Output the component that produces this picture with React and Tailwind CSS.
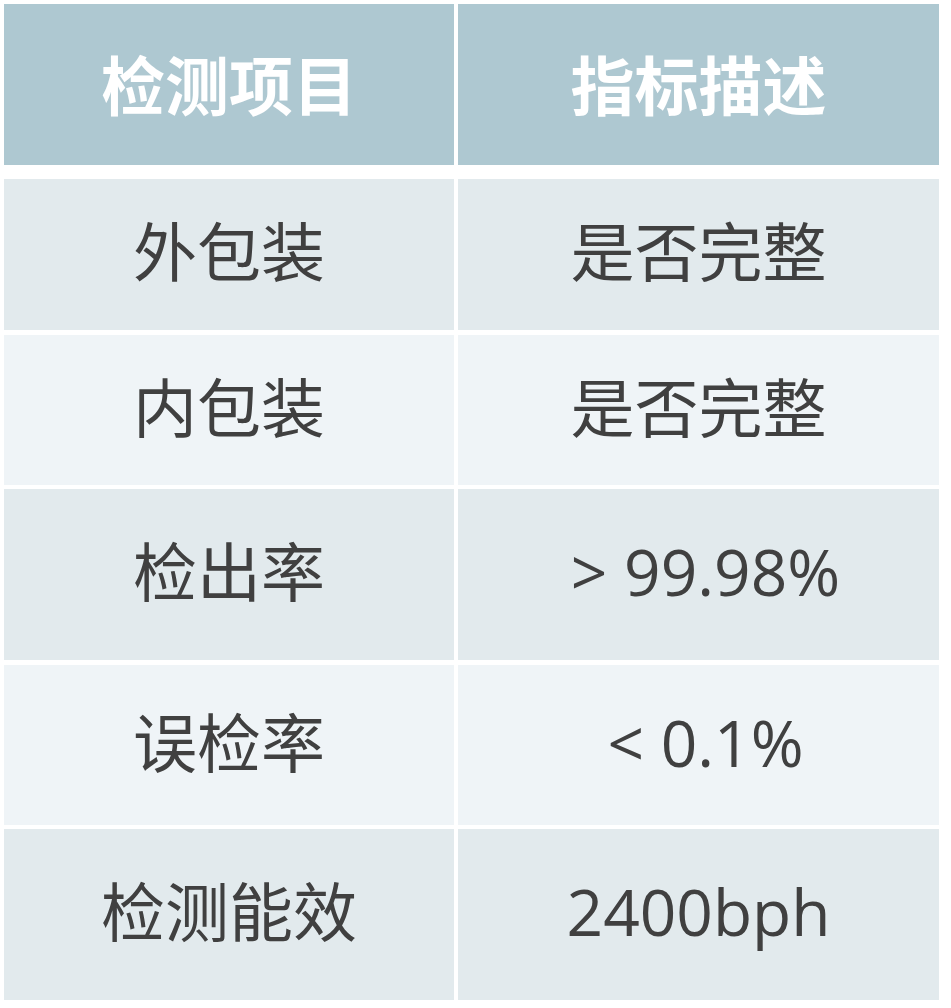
export default function App() {
  const rows = [
    { a: "外包装", b: "是否完整", h: "h-[151px]", bg: "bg-[#e2eaed]" },
    { a: "内包装", b: "是否完整", h: "h-[150px]", bg: "bg-[#eff4f7]" },
    { a: "检出率", b: "> 99.98%", h: "h-[171px]", bg: "bg-[#e2eaed]", pl: "pl-[14px]" },
    { a: "误检率", b: "< 0.1%", h: "h-[160px]", bg: "bg-[#eff4f7]", pl: "pl-[14px]" },
    { a: "检测能效", b: "2400bph", h: "h-[171px]", bg: "bg-[#e2eaed]" },
  ];
  const gaps = ["mt-[14px]", "mt-[5px]", "mt-[4px]", "mt-[5px]", "mt-[4px]"];
  return (
    <div
      className="w-[951px] h-[1008px] bg-white pt-[4px] pl-[4px]"
      style={{ fontFamily: '"Open Sans", "Noto Sans CJK SC", sans-serif' }}
    >
      <div className="flex gap-[4px] h-[161px]">
        <div className="w-[450px] bg-[#aec8d1] flex items-center justify-center text-white font-bold text-[64px] leading-none pt-[2px]">
          检测项目
        </div>
        <div className="w-[481px] bg-[#aec8d1] flex items-center justify-center text-white font-bold text-[64px] leading-none pt-[2px]">
          指标描述
        </div>
      </div>
      {rows.map((r, i) => (
        <div key={i} className={`flex gap-[4px] ${r.h} ${gaps[i]}`}>
          <div className={`w-[450px] ${r.bg} flex items-center justify-center text-[#404040] text-[64px] leading-none pb-[5px]`}>
            {r.a}
          </div>
          <div className={`w-[481px] ${r.bg} flex items-center justify-center text-[#404040] text-[64px] leading-none pb-[5px] ${r.pl || ""}`}>
            {r.b}
          </div>
        </div>
      ))}
    </div>
  );
}
